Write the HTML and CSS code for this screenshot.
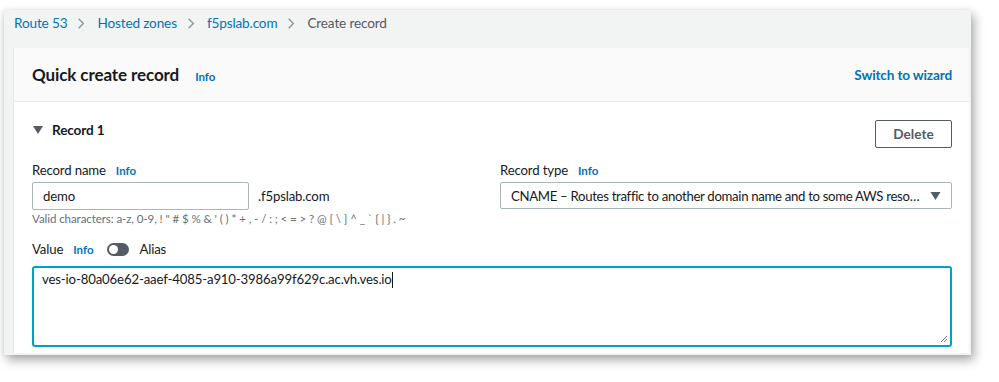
FILE: index.html
```html
<!DOCTYPE html>
<html>
<head>
<meta charset="utf-8">
<link rel="stylesheet" href="styles.css">
</head>
<body>
<div class="frame">
  <nav class="crumbs">
    <a class="crumb">Route 53</a>
    <svg class="chev" viewBox="0 0 10 16" width="8" height="13"><path d="M2 2l6 6-6 6" fill="none" stroke="#879596" stroke-width="1.6"/></svg>
    <a class="crumb">Hosted zones</a>
    <svg class="chev" viewBox="0 0 10 16" width="8" height="13"><path d="M2 2l6 6-6 6" fill="none" stroke="#879596" stroke-width="1.6"/></svg>
    <a class="crumb">f5pslab.com</a>
    <svg class="chev" viewBox="0 0 10 16" width="8" height="13"><path d="M2 2l6 6-6 6" fill="none" stroke="#879596" stroke-width="1.6"/></svg>
    <span class="crumb current">Create record</span>
  </nav>
  <section class="card">
    <header class="card-head">
      <div class="title-wrap">
        <h1 class="title">Quick create record</h1>
        <a class="info">Info</a>
      </div>
      <a class="wizard">Switch to wizard</a>
    </header>
    <div class="card-body">
      <div class="record-head">
        <div class="record-title">
          <svg class="caret" viewBox="0 0 10 8" width="10" height="8"><path d="M0 0h10L5 8z" fill="#545b64"/></svg>
          <span>Record 1</span>
        </div>
        <button class="btn">Delete</button>
      </div>
      <div class="row">
        <div class="col">
          <div class="label-line"><span class="label">Record name</span><a class="info">Info</a></div>
          <div class="name-line">
            <div class="input">demo</div>
            <span class="suffix">.f5pslab.com</span>
          </div>
          <div class="hint">Valid characters: a-z, 0-9, ! " # $ % &amp; ' ( ) * + , - / : ; &lt; = &gt; ? @ [ \ ] ^ _ ` { | } . ~</div>
        </div>
        <div class="col col-right">
          <div class="label-line"><span class="label">Record type</span><a class="info">Info</a></div>
          <div class="select">
            <span class="select-text">CNAME – Routes traffic to another domain name and to some AWS reso…</span>
            <svg class="select-caret" viewBox="0 0 10 8" width="11" height="8"><path d="M0 0h10L5 8z" fill="#545b64"/></svg>
          </div>
        </div>
      </div>
      <div class="label-line value-line">
        <span class="label">Value</span><a class="info">Info</a>
        <span class="toggle"><span class="knob"></span></span>
        <span class="label">Alias</span>
      </div>
      <div class="textarea">
        <span>ves-io-80a06e62-aaef-4085-a910-3986a99f629c.ac.vh.ves.io</span><span class="cursor"></span>
        <svg class="grip" viewBox="0 0 8 8" width="8" height="8"><path d="M7 1L1 7M7 4L4 7" stroke="#777" stroke-width="1"/></svg>
      </div>
    </div>
  </section>
</div>
</body>
</html>
```
FILE: styles.css
```css
* { box-sizing: border-box; }
html, body { margin: 0; padding: 0; background: #fff; }
body {
  font-family: "Lato", "Liberation Sans", sans-serif;
  font-size: 13.2px;
  letter-spacing: -0.15px;
  color: #16191f;
  width: 999px;
  height: 382px;
  overflow: hidden;
}
.frame {
  margin: 10px 0 0 4px;
  width: 967px;
  height: 345px;
  background: #f2f3f3;
  box-shadow: 3px 5px 10px rgba(0,0,0,0.35), -1px 0 4px rgba(0,0,0,0.08);
  display: flex;
  flex-direction: column;
  overflow: hidden;
}
.crumbs {
  height: 38px;
  display: flex;
  align-items: flex-start;
  padding: 5px 0 0 10px;
}
.crumb { color: #0073bb; font-size: 13.6px; line-height: 17px; }
.crumb.current { color: #545b64; }
.chev { margin: 2px 12px 0 10px; flex: none; }
.card {
  margin: 0 2px 2px 9px;
  flex: 1;
  background: #fff;
  border-left: 1px solid #e4e7e8;
  display: flex;
  flex-direction: column;
}
.card-head {
  height: 54px;
  background: #fafafa;
  border-bottom: 1px solid #eaeded;
  display: flex;
  align-items: center;
  justify-content: space-between;
  padding: 0 17px 0 18px;
}
.title-wrap { display: flex; align-items: baseline; gap: 16px; }
.title { margin: 0; font-size: 17px; font-weight: 700; color: #16191f; letter-spacing: -0.1px; }
.info { color: #0073bb; font-weight: 700; font-size: 11.5px; letter-spacing: 0; }
.wizard { color: #0073bb; font-weight: 700; font-size: 13.6px; }
.card-body { padding: 15px 17px 0 18px; display: flex; flex-direction: column; }
.record-head { display: flex; justify-content: space-between; align-items: flex-start; }
.record-title { display: flex; align-items: center; gap: 9px; font-weight: 700; margin-top: 5px; font-size: 13.6px; }
.caret { margin-left: 1px; }
.btn {
  width: 77px;
  height: 28px;
  margin-top: 3px;
  border: 1px solid #545b64;
  border-radius: 2px;
  background: #fff;
  color: #545b64;
  font-family: inherit;
  font-weight: 700;
  font-size: 13.6px;
  letter-spacing: 0;
  padding: 0;
}
.row { display: flex; margin-top: 14px; }
.col { width: 468px; flex: none; }
.col-right { flex: 1; min-width: 0; }
.label-line { display: flex; align-items: baseline; gap: 10px; }
.label { color: #16191f; }
.name-line { display: flex; align-items: center; gap: 9px; margin-top: 4px; }
.input {
  width: 217px;
  height: 28px;
  border: 1px solid #aab7b8;
  border-radius: 2px;
  padding: 0 10px;
  display: flex;
  align-items: center;
}
.suffix { color: #16191f; }
.hint { font-size: 11.6px; color: #687078; margin-top: 2px; letter-spacing: -0.1px; }
.select {
  margin-top: 4px;
  height: 27px;
  border: 1px solid #aab7b8;
  border-radius: 2px;
  display: flex;
  align-items: center;
  padding: 0 10px 0 10px;
  gap: 8px;
}
.select-text { flex: 1; white-space: nowrap; overflow: hidden; letter-spacing: -0.32px; }
.value-line { margin-top: 16px; align-items: center; }
.toggle {
  width: 22px; height: 13px;
  border-radius: 7px;
  background: #545b64;
  position: relative;
  margin-left: 4px;
}
.knob {
  position: absolute; left: 2px; top: 2px;
  width: 9px; height: 9px; border-radius: 50%; background: #fff;
}
.textarea {
  position: relative;
  margin-top: 9px;
  height: 81px;
  border: 2px solid #00a1c9;
  border-radius: 3px;
  padding: 3px 8px;
  display: flex;
  align-items: flex-start;
}
.cursor { display: inline-block; width: 1px; height: 16px; background: #16191f; margin-top: 1px; }
.grip { position: absolute; right: 2px; bottom: 2px; }
```
